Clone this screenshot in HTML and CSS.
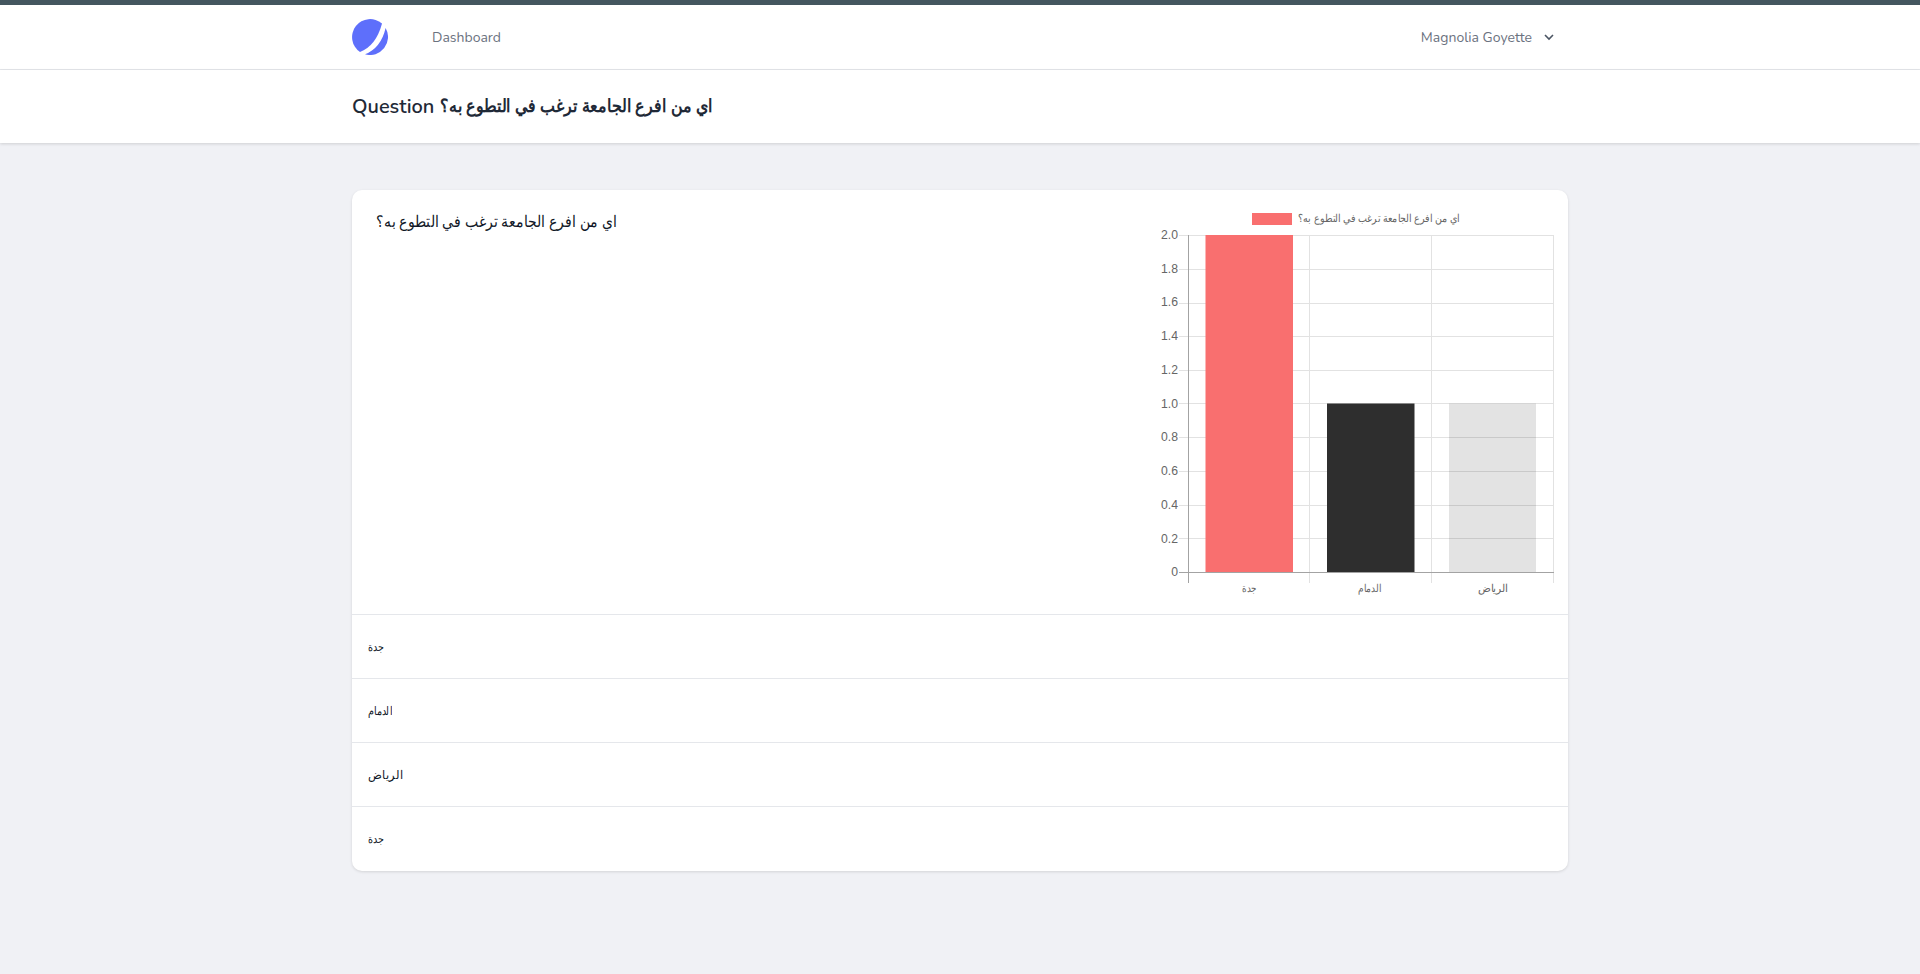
FILE: index.html
```html
<!DOCTYPE html>
<html lang="en">
<head>
<meta charset="utf-8">
<title>Question</title>
<link rel="stylesheet" href="styles.css">
</head>
<body>
<div class="topbar"></div>
<nav class="nav">
  <div class="container nav-inner">
    <svg class="logo" viewBox="0 0 36 36"><path fill="#5e6ffb" d="M30 4.600A18 18 0 1 0 8 33Q24 27 30 4.600Z"/><path fill="#5e6ffb" d="M33.600 9A18 18 0 0 1 13 35.300Q29 29 33.600 9Z"/></svg>
    <a class="nav-link">Dashboard</a>
    <div class="user">
      <span>Magnolia Goyette</span>
      <svg class="chev" viewBox="0 0 12 12"><path d="M2 4L6 8L10 4" fill="none" stroke="#4b5563" stroke-width="1.600"/></svg>
    </div>
  </div>
</nav>
<header class="page-header">
  <div class="container"><h1 class="title">Question <span class="ar ar-title" dir="rtl">اي من افرع الجامعة ترغب في التطوع به؟</span></h1></div>
</header>
<main class="container main">
  <section class="card">
    <div class="card-top">
      <h2 class="question"><span class="ar ar-q" dir="rtl">اي من افرع الجامعة ترغب في التطوع به؟</span></h2>
      <svg class="chart" width="440" height="425" viewBox="1128 190 440 425">
        <g class="grid">
          <path d="M1179 235.500H1554M1179 269.500H1554M1179 303.500H1554M1179 336.500H1554M1179 370.500H1554M1179 403.500H1554M1179 437.500H1554M1179 471.500H1554M1179 505.500H1554M1179 538.500H1554"/>
          <path d="M1309.500 235V583M1431.500 235V583M1553.500 235V583"/>
        </g>
        <rect x="1252" y="213" width="40" height="12" fill="#f96f6f"/>
        <text class="legend" x="1298" y="222" textLength="162" lengthAdjust="spacingAndGlyphs">اي من افرع الجامعة ترغب في التطوع به؟</text>
        <rect x="1205.500" y="235" width="87.500" height="337" fill="#f96f6f"/>
        <rect x="1327" y="403.500" width="87.500" height="168.500" fill="#2e2e2e"/>
        <rect x="1449" y="403.500" width="87" height="168.500" fill="#000" fill-opacity=".11"/>
        <path class="axis" d="M1188.500 235V583M1179 572.500H1554"/>
        <g class="ticks">
          <text x="1178" y="239">2.0</text><text x="1178" y="273">1.8</text><text x="1178" y="306">1.6</text><text x="1178" y="340">1.4</text><text x="1178" y="374">1.2</text><text x="1178" y="408">1.0</text><text x="1178" y="441">0.8</text><text x="1178" y="475">0.6</text><text x="1178" y="509">0.4</text><text x="1178" y="543">0.2</text><text x="1178" y="576">0</text>
        </g>
        <g class="xlabels">
          <text x="1242" y="592" textLength="15" lengthAdjust="spacingAndGlyphs">جدة</text>
          <text x="1358" y="592" textLength="23" lengthAdjust="spacingAndGlyphs">الدمام</text>
          <text x="1478" y="592" textLength="30" lengthAdjust="spacingAndGlyphs">الرياض</text>
        </g>
      </svg>
    </div>
    <div class="row"><span class="ar ar-row" dir="rtl">جدة</span></div>
    <div class="row"><span class="ar ar-row" dir="rtl">الدمام</span></div>
    <div class="row"><span class="ar ar-row ar-wide" dir="rtl">الرياض</span></div>
    <div class="row"><span class="ar ar-row" dir="rtl">جدة</span></div>
  </section>
</main>
</body>
</html>
```

FILE: styles.css
```css
* { box-sizing: border-box; }
html, body { margin: 0; padding: 0; }
body {
  background: #f0f1f5;
  min-height: 974px;
  font-family: Nunito, "Open Sans", sans-serif;
  color: #111827;
}
.topbar { height: 5px; background: #44565f; }
.container { width: 1216px; margin: 0 auto; }
.nav { background: #fff; height: 65px; border-bottom: 1px solid #e5e7eb; }
.nav-inner { display: flex; align-items: center; height: 64px; padding-right: 13px; }
.logo { width: 36px; height: 36px; flex: none; }
.nav-link { margin-left: 44px; font-size: 14px; color: #6b7280; }
.user { margin-left: auto; display: flex; align-items: center; gap: 11px; font-size: 14px; color: #6b7280; }
.chev { width: 12px; height: 12px; }
.page-header { background: #fff; height: 73px; display: flex; align-items: center; box-shadow: 0 1px 3px rgba(0,0,0,.14); }
.title { margin: 0; font-size: 20px; font-weight: 600; color: #1f2937; line-height: 28px; white-space: nowrap; }
.main { padding-top: 47px; }
.card { background: #fff; border-radius: 10px; box-shadow: 0 1px 3px rgba(0,0,0,.12); overflow: hidden; }
.card-top { display: flex; justify-content: space-between; height: 425px; border-bottom: 1px solid #e5e7eb; }
.question { margin: 18px 0 0 24px; font-size: 16px; font-weight: 400; line-height: 28px; height: 28px; color: #111827; }
.ar { display: inline-block; transform-origin: left center; font-family: "Liberation Sans", sans-serif; white-space: nowrap; }
.ar-title { font-size: 18px; font-weight: 700; transform: translateY(-1px) scaleX(.88); }
.ar-q { font-size: 16px; transform: scaleX(.875); }
.ar-row { font-size: 12px; transform: scaleX(.8); }
.ar-wide { transform: scaleX(.96); }
.chart { flex: none; display: block; }
.grid path { stroke: #e2e2e2; stroke-width: 1; fill: none; }
.axis { stroke: #a3a3a3; stroke-width: 1; fill: none; }
.legend { font: 11px "Liberation Sans", sans-serif; fill: #666; }
.ticks text { font: 12.200px "Liberation Sans", sans-serif; fill: #666; text-anchor: end; }
.xlabels text { font: 11px "Liberation Sans", sans-serif; fill: #666; }
.row { height: 64px; padding: 0 16px; display: flex; align-items: center; color: #111827; border-bottom: 1px solid #e5e7eb; }
.row:last-child { border-bottom: 0; }
```
